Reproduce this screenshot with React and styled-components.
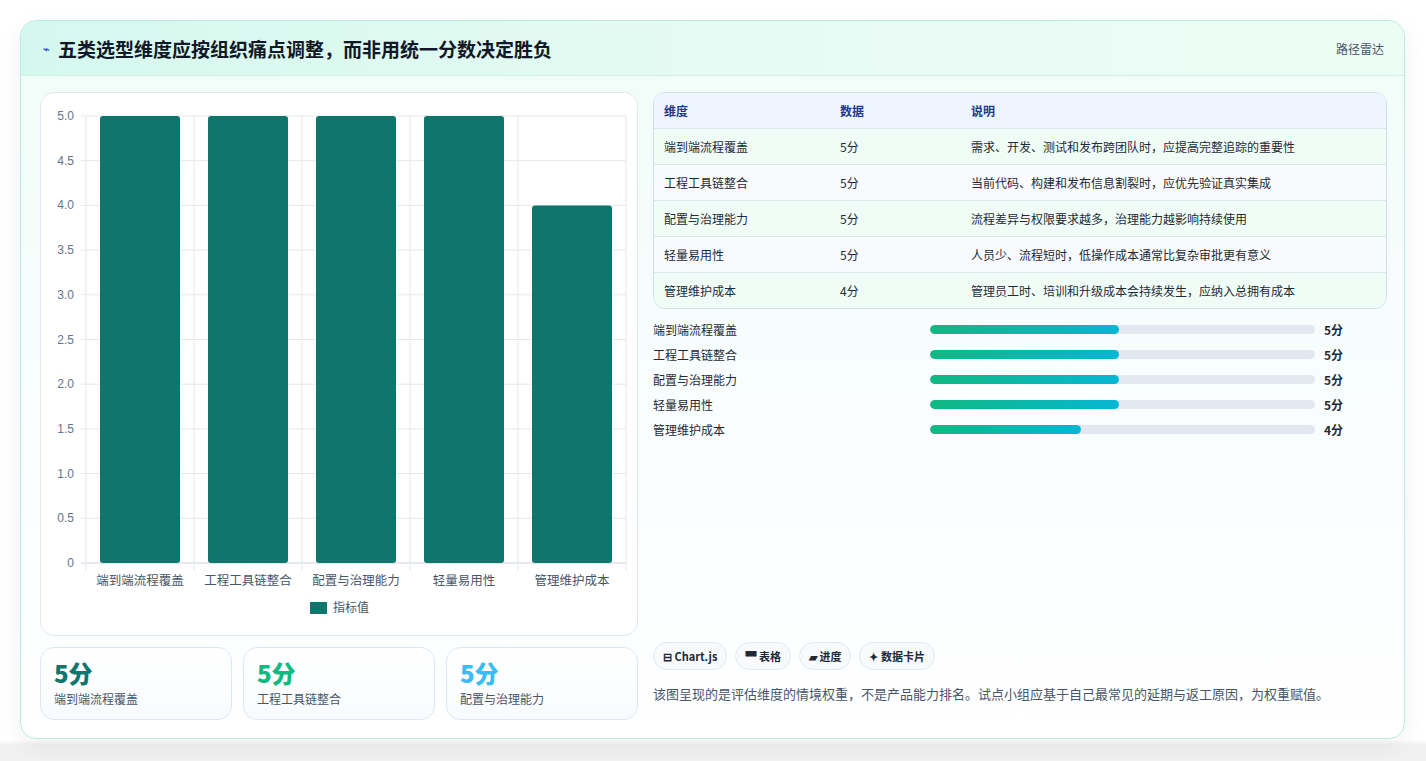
import React from "react";
import styled, { createGlobalStyle } from "styled-components";

const Global = createGlobalStyle`
  html,body{margin:0;background:#f3f4f6;}
  body{font-family:"Noto Sans CJK SC","Noto Sans",sans-serif;}
`;
const Page = styled.div`padding:20px 21px 22px 20px;background:#fff;height:761px;box-sizing:border-box;background:linear-gradient(#fff 0,#fff 740px,#f1f1f1 745px);`;
const Card = styled.div`
  border:1px solid #b9ece6;border-radius:16px;overflow:hidden;height:719px;box-sizing:border-box;
  background:linear-gradient(180deg,#f0fdf8 0%,#fafdff 60%,#fff 100%);
  box-shadow:0 8px 24px rgba(0,0,0,0.06);
`;
const Header = styled.div`
  height:55px;box-sizing:border-box;display:flex;align-items:center;justify-content:space-between;
  padding:0 20px 0 22px;background:linear-gradient(90deg,#d5f8ee,#e8fbf4 60%,#ecfdf5);border-bottom:1px solid #d4efe8;
`;
const Title = styled.h1`margin:0;font-size:19px;font-weight:700;color:#111827;display:flex;align-items:center;gap:8px;`;
const Bolt = styled.span`color:#3b5bdb;font-size:11px;`;
const Tag = styled.span`font-size:12px;color:#475569;`;
const Body = styled.div`display:grid;grid-template-columns:598px 734px;gap:15px;padding:16px 18px 0 19px;`;
const Left = styled.div`display:flex;flex-direction:column;gap:11px;`;
const ChartCard = styled.div`height:544px;background:#fff;border:1px solid #e2e8f0;border-radius:14px;box-sizing:border-box;`;
const Stats = styled.div`display:grid;grid-template-columns:repeat(3,1fr);gap:11px;`;
const Stat = styled.div`height:73px;box-sizing:border-box;border:1px solid #dde7f3;border-radius:14px;background:linear-gradient(#fff,#f8fbfe);padding:10px 13px;`;
const StatNum = styled.div`font-size:24px;font-weight:800;color:${p=>p.c};line-height:30px;`;
const StatLabel = styled.div`font-size:12px;color:#475569;margin-top:2px;`;
const Right = styled.div`display:flex;flex-direction:column;`;
const Table = styled.div`border:1px solid #cfe0ea;border-radius:12px;overflow:hidden;background:#fff;`;
const Row = styled.div`display:grid;grid-template-columns:176px 131px 1fr;height:35px;align-items:center;padding:0 10px;font-size:12px;
  color:${p=>p.head?"#1e3a8a":"#1f2937"};font-weight:${p=>p.head?600:400};
  background:${p=>p.head?"#eef5fe":p.alt?"#f8fafc":"#f0fdf6"};
  border-top:${p=>p.first?"none":"1px solid #dbe6ee"};`;
const Bars = styled.div`display:flex;flex-direction:column;gap:7px;margin-top:11px;`;
const BarRow = styled.div`display:grid;grid-template-columns:277px 385px 1fr;align-items:center;height:18px;font-size:12px;color:#1f2937;`;
const Track = styled.div`height:9px;background:#e2e8f0;border-radius:5px;overflow:hidden;`;
const Fill = styled.div`height:100%;border-radius:5px;background:linear-gradient(90deg,#10b981,#06b6d4);`;
const Val = styled.span`font-weight:700;padding-left:9px;`;
const Spacer = styled.div`flex:1;`;
const Chips = styled.div`display:flex;gap:8px;margin-bottom:14px;`;
const Chip = styled.span`height:28px;box-sizing:border-box;padding:0 9px;border:1px solid #e2e8f0;border-radius:14px;background:#f8fafc;font-size:11px;font-weight:600;color:#1f2937;display:flex;align-items:center;gap:3px;`;
const Note = styled.p`margin:0 0 17px;font-size:13px;color:#475569;`;

const dims = ["端到端流程覆盖","工程工具链整合","配置与治理能力","轻量易用性","管理维护成本"];
const vals = [5,5,5,5,4];
const notes = ["需求、开发、测试和发布跨团队时，应提高完整追踪的重要性","当前代码、构建和发布信息割裂时，应优先验证真实集成","流程差异与权限要求越多，治理能力越影响持续使用","人员少、流程短时，低操作成本通常比复杂审批更有意义","管理员工时、培训和升级成本会持续发生，应纳入总拥有成本"];

function Chart(){
  const L=45,R=585,T=23,B=470,w=(R-L)/5;
  const ticks=[0,0.5,1,1.5,2,2.5,3,3.5,4,4.5,5];
  const y=v=>B-(B-T)*v/5;
  return <svg width="596" height="542" style={{display:"block"}}>
    {ticks.map(t=><g key={t}>
      <line x1={L-5} x2={R} y1={y(t)} y2={y(t)} stroke={t===0?"#cbd5e1":"#e5e7eb"}/>
      <text x={L-12} y={y(t)+4} textAnchor="end" fontSize="12" fill="#64748b" fontFamily="Liberation Sans">{t===0?"0":t.toFixed(1)}</text>
    </g>)}
    {[0,1,2,3,4,5].map(i=><line key={i} x1={L+i*w} x2={L+i*w} y1={T} y2={B+8} stroke="#e5e7eb"/>)}
    {vals.map((v,i)=><rect key={i} x={L+i*w+14} width={w-28} y={y(v)} height={B-y(v)} rx="3" fill="#0f766e"/>)}
    {dims.map((d,i)=><text key={d} x={L+i*w+w/2} y={492} textAnchor="middle" fontSize="12.5" fill="#475569">{d}</text>)}
    <rect x={269} y={509} width={17} height={12} fill="#0f766e"/>
    <text x={292} y={519} fontSize="12" fill="#475569">指标值</text>
  </svg>;
}

export default function App(){
  return <><Global/><Page><Card>
    <Header><Title><Bolt>⌁</Bolt>五类选型维度应按组织痛点调整，而非用统一分数决定胜负</Title><Tag>路径雷达</Tag></Header>
    <Body>
      <Left>
        <ChartCard><Chart/></ChartCard>
        <Stats>
          <Stat><StatNum c="#0f766e">5分</StatNum><StatLabel>端到端流程覆盖</StatLabel></Stat>
          <Stat><StatNum c="#10b981">5分</StatNum><StatLabel>工程工具链整合</StatLabel></Stat>
          <Stat><StatNum c="#38bdf8">5分</StatNum><StatLabel>配置与治理能力</StatLabel></Stat>
        </Stats>
      </Left>
      <Right>
        <Table>
          <Row head first><span>维度</span><span>数据</span><span>说明</span></Row>
          {dims.map((d,i)=><Row key={d} alt={i%2===1}><span>{d}</span><span>{vals[i]}分</span><span>{notes[i]}</span></Row>)}
        </Table>
        <Bars>
          {dims.map((d,i)=><BarRow key={d}><span>{d}</span><Track><Fill style={{width:`${vals[i]*9.8}%`}}/></Track><Val>{vals[i]}分</Val></BarRow>)}
        </Bars>
        <Spacer/>
        <Chips><Chip>⊟ Chart.js</Chip><Chip>▀ 表格</Chip><Chip>▰ 进度</Chip><Chip>✦ 数据卡片</Chip></Chips>
        <Note>该图呈现的是评估维度的情境权重，不是产品能力排名。试点小组应基于自己最常见的延期与返工原因，为权重赋值。</Note>
      </Right>
    </Body>
  </Card></Page></>;
}
